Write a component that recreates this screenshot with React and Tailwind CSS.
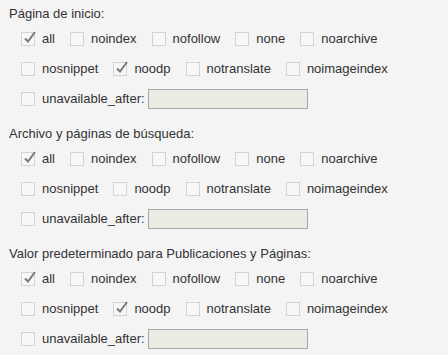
import React from 'react';

const sections = [
    { title: 'Página de inicio:', checked: ['all', 'noodp'] },
    { title: 'Archivo y páginas de búsqueda:', checked: ['all'] },
    { title: 'Valor predeterminado para Publicaciones y Páginas:', checked: ['all', 'noodp'] },
];

const rows = [
    ['all', 'noindex', 'nofollow', 'none', 'noarchive'],
    ['nosnippet', 'noodp', 'notranslate', 'noimageindex'],
];

function Box({ checked }) {
    return (
        <span className="relative w-[14px] h-[14px] border border-[#d4d4d4] bg-[#f7f7f7] shrink-0">
            {checked && (
                <svg className="absolute left-[1px] top-[-3px] overflow-visible" width="14" height="14" viewBox="0 0 14 14">
                    <path d="M2 8.5 L5 11.5 L12 2" fill="none" stroke="#7a7a7a" strokeWidth="2" />
                </svg>
            )}
        </span>
    );
}

function Option({ name, checked }) {
    return (
        <label className="inline-flex items-center mr-[15px]">
            <Box checked={checked} />
            <span className="ml-[7px]">{name}</span>
        </label>
    );
}

export default function App() {
    return (
        <div className="w-[448px] h-[355px] overflow-hidden bg-[#f4f4f4] text-[#333] text-[13px] leading-[20px]" style={{ fontFamily: '"Liberation Sans", Arial, sans-serif' }}>
            {sections.map((s) => (
                <div key={s.title} className="pt-[4px] pb-[6px]">
                    <div className="h-[20px] pl-[9px]">{s.title}</div>
                    {rows.map((r, i) => (
                        <div key={i} className="h-[30px] pl-[21px] flex items-center">
                            {r.map((n) => (
                                <Option key={n} name={n} checked={s.checked.includes(n)} />
                            ))}
                        </div>
                    ))}
                    <div className="h-[30px] pl-[21px] flex items-center">
                        <label className="inline-flex items-center">
                            <Box checked={false} />
                            <span className="ml-[7px]">unavailable_after:</span>
                        </label>
                        <input
                            type="text"
                            disabled
                            className="ml-[3px] w-[160px] h-[20px] border border-[#a9a9a9] bg-[#ebebe4]"
                        />
                    </div>
                </div>
            ))}
        </div>
    );
}
